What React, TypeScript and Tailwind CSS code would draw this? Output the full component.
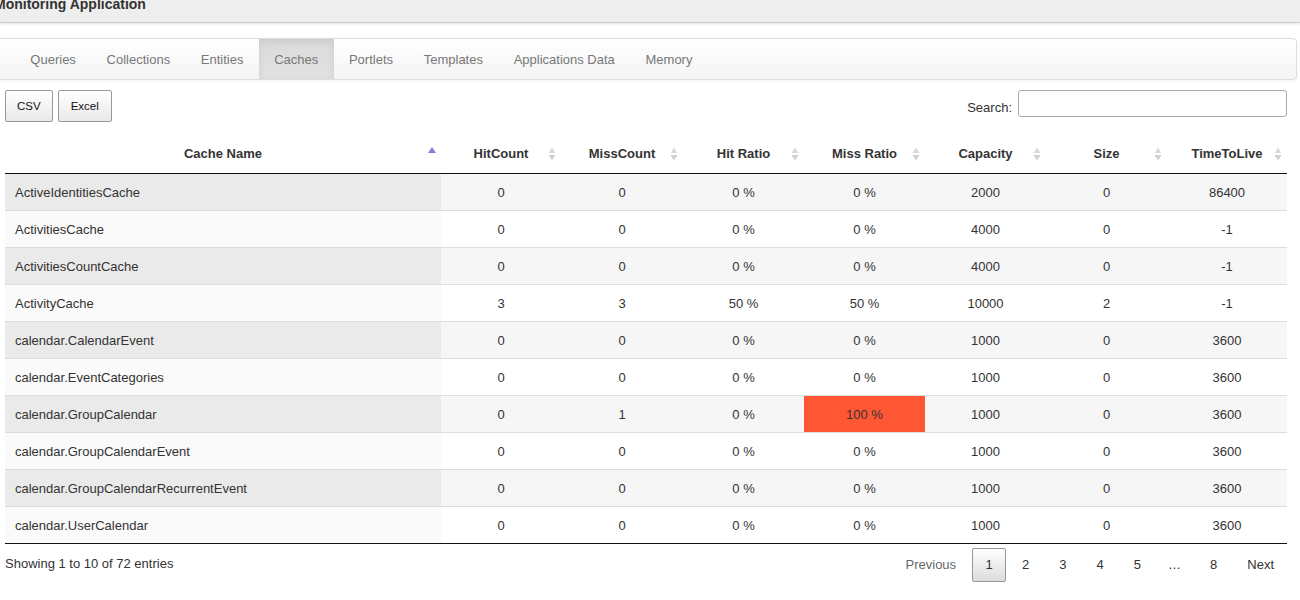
import React from "react";

const tabs = ["Queries", "Collections", "Entities", "Caches", "Portlets", "Templates", "Applications Data", "Memory"];

const headers = ["Cache Name", "HitCount", "MissCount", "Hit Ratio", "Miss Ratio", "Capacity", "Size", "TimeToLive"];

type Row = [string, string, string, string, string, string, string, string];

const rows: Row[] = [
  ["ActiveIdentitiesCache", "0", "0", "0 %", "0 %", "2000", "0", "86400"],
  ["ActivitiesCache", "0", "0", "0 %", "0 %", "4000", "0", "-1"],
  ["ActivitiesCountCache", "0", "0", "0 %", "0 %", "4000", "0", "-1"],
  ["ActivityCache", "3", "3", "50 %", "50 %", "10000", "2", "-1"],
  ["calendar.CalendarEvent", "0", "0", "0 %", "0 %", "1000", "0", "3600"],
  ["calendar.EventCategories", "0", "0", "0 %", "0 %", "1000", "0", "3600"],
  ["calendar.GroupCalendar", "0", "1", "0 %", "100 %", "1000", "0", "3600"],
  ["calendar.GroupCalendarEvent", "0", "0", "0 %", "0 %", "1000", "0", "3600"],
  ["calendar.GroupCalendarRecurrentEvent", "0", "0", "0 %", "0 %", "1000", "0", "3600"],
  ["calendar.UserCalendar", "0", "0", "0 %", "0 %", "1000", "0", "3600"],
];

const GRID = "grid grid-cols-[436px_120px_122px_121px_121px_121px_121px_120px]";

function SortIcon({ asc }: { asc?: boolean }) {
  return (
    <svg width="8" height="14" viewBox="0 0 8 14" className="absolute right-[5px] top-1/2 -translate-y-1/2">
      {asc ? (
        <path d="M0 6 L4 0 L8 6 Z" fill="#7c80d8" />
      ) : (
        <>
          <path d="M0.5 6 L4 0.5 L7.5 6 Z" fill="#dadada" />
          <path d="M0.5 8 L7.5 8 L4 13.5 Z" fill="#d0d0d0" />
        </>
      )}
    </svg>
  );
}

export default function App() {
  return (
    <div className="w-[1300px] h-[600px] bg-white overflow-hidden font-['Liberation_Sans',Arial,sans-serif] text-[#333]">
      {/* Top header */}
      <div className="relative h-[23px] bg-[#eeeeee] border-b border-[#cccccc] shadow-[0_1px_3px_rgba(0,0,0,0.12)] overflow-hidden">
        <div className="absolute left-[-6px] top-[-4px] text-[14px] leading-[16px] font-bold text-[#333] whitespace-nowrap">
          Monitoring Application
        </div>
      </div>

      {/* Navbar */}
      <div className="mt-[15px] ml-[-4px] w-[1301px] h-[42px] border border-[#dddddd] rounded-[4px] bg-gradient-to-b from-white to-[#f4f4f4] shadow-[0_1px_4px_rgba(0,0,0,0.06)] overflow-hidden">
        <ul className="flex h-full pl-[18px]">
          {tabs.map((t) => (
            <li
              key={t}
              className={
                t === "Caches"
                  ? "px-[15.35px] pt-[2px] h-full flex items-center text-[13px] text-[#777] bg-gradient-to-b from-[#dbdbdb] to-[#e2e2e2] shadow-[inset_0_3px_9px_rgba(0,0,0,0.08)]"
                  : "px-[15.35px] pt-[2px] h-full flex items-center text-[13px] text-[#777]"
              }
            >
              {t}
            </li>
          ))}
        </ul>
      </div>

      {/* Content */}
      <div className="pl-[5px] w-[1287px]">
        {/* Controls */}
        <div className="mt-[10px] flex justify-between items-start">
          <div className="flex gap-[5px]">
            <button className="h-[32px] pt-[1px] px-[11px] border border-[#999] rounded-[2px] bg-gradient-to-b from-white to-[#e9e9e9] text-[11.5px] text-[#111]">
              CSV
            </button>
            <button className="h-[32px] pt-[1px] px-[12px] border border-[#999] rounded-[2px] bg-gradient-to-b from-white to-[#e9e9e9] text-[11.5px] text-[#111]">
              Excel
            </button>
          </div>
          <div className="flex items-start">
            <span className="pt-[8px] text-[13px] leading-[20px] text-[#333]">Search:</span>
            <input className="ml-[6px] w-[269px] h-[27px] border border-[#aaaaaa] rounded-[3px] bg-white" />
          </div>
        </div>

        {/* Table */}
        <div className="mt-[13px]">
          <div className={`${GRID} h-[39px] border-b border-[#111]`}>
            {headers.map((h, i) => (
              <div key={h} className="relative flex items-center justify-center text-[13px] font-bold text-[#333]">
                {h}
                <SortIcon asc={i === 0} />
              </div>
            ))}
          </div>
          {rows.map((r, ri) => {
            const odd = ri % 2 === 0;
            return (
              <div
                key={r[0]}
                className={`${GRID} ${ri === 0 ? "h-[36px]" : "h-[37px] border-t border-[#dddddd]"} ${odd ? "bg-[#f6f6f6]" : "bg-white"}`}
              >
                {r.map((c, ci) => {
                  const red = ci === 4 && c === "100 %";
                  let cls = "flex items-center pt-[2px] text-[13px] text-[#333] ";
                  if (ci === 0) {
                    cls += "pl-[10px] " + (odd ? "bg-[#eaeaea]" : "bg-[#fafafa]");
                  } else {
                    cls += "justify-center ";
                    if (red) cls += "bg-[#ff5733]";
                  }
                  return (
                    <div key={ci} className={cls}>
                      {c}
                    </div>
                  );
                })}
              </div>
            );
          })}
          <div className="h-px bg-[#111]" />
        </div>

        {/* Footer */}
        <div className="flex justify-between items-start">
          <div className="pt-[10px] text-[13px] leading-[20px] text-[#333]">Showing 1 to 10 of 72 entries</div>
          <div className="flex items-center pt-[3px] mr-[-1px] text-[13px] leading-[20px]">
            <span className="px-[13px] py-[7px] text-[#666] border border-transparent">Previous</span>
            <span className="ml-[2px] w-[34px] text-center py-[6px] border border-[#979797] rounded-[2px] bg-gradient-to-b from-white to-[#dcdcdc] text-[#333]">1</span>
            {["2", "3", "4", "5"].map((p) => (
              <span key={p} className="ml-[2px] px-[13px] py-[6px] border border-transparent text-[#333]">
                {p}
              </span>
            ))}
            <span className="px-[13px] py-[6px] text-[#333]">…</span>
            <span className="ml-[2px] px-[13px] py-[6px] border border-transparent text-[#333]">8</span>
            <span className="ml-[2px] px-[13px] py-[6px] border border-transparent text-[#333]">Next</span>
          </div>
        </div>
      </div>
    </div>
  );
}
